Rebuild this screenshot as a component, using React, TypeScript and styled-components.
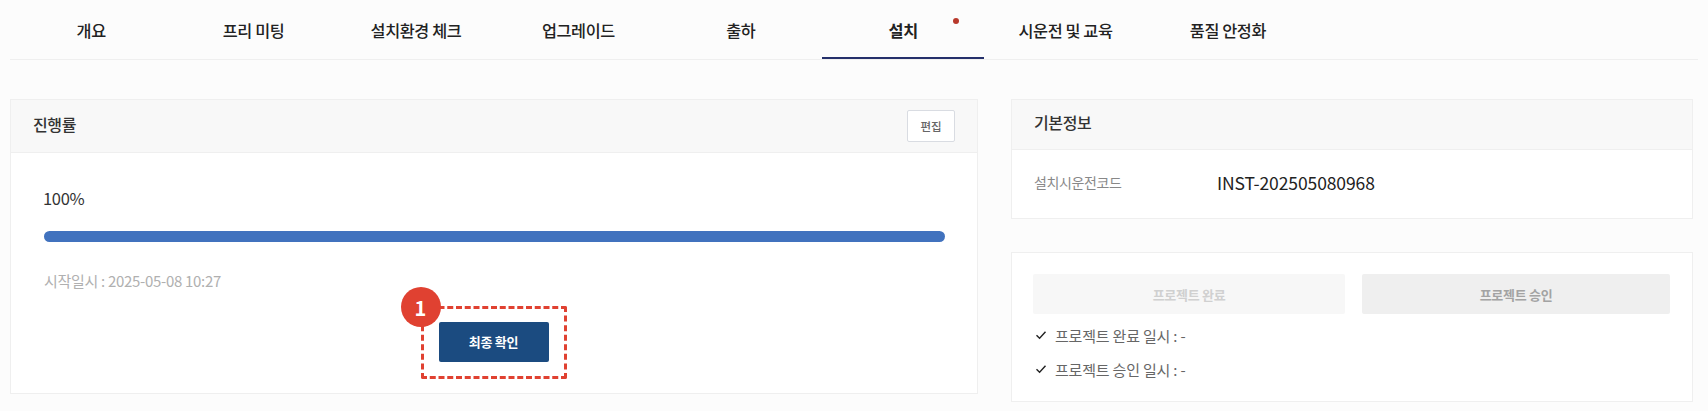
import styled, { createGlobalStyle } from 'styled-components';

const GlobalStyle = createGlobalStyle`
  html, body {
    margin: 0;
    padding: 0;
    background: #fcfcfc;
    font-family: 'Noto Sans CJK KR', 'Noto Sans', sans-serif;
    color: #222;
  }
  * { box-sizing: border-box; }
`;

const Page = styled.div`
  width: 1708px;
  height: 411px;
  overflow: hidden;
  padding: 0 15px 0 10px;
`;

const TabBar = styled.div`
  display: flex;
  height: 60px;
  border-bottom: 1px solid #efefef;
  margin-right: -5px;
`;

const Tab = styled.div<{ $active?: boolean }>`
  position: relative;
  width: 162.4px;
  height: 59px;
  padding-top: 3px;
  display: flex;
  align-items: center;
  justify-content: center;
  font-size: 16.3px;
  font-weight: ${(p) => (p.$active ? 700 : 500)};
  letter-spacing: -0.4px;
  color: #222;
  border-bottom: 2px solid ${(p) => (p.$active ? '#25306b' : 'transparent')};
`;

const Dot = styled.span`
  position: absolute;
  top: 18px;
  left: 131px;
  width: 6px;
  height: 6px;
  border-radius: 50%;
  background: #b8392b;
`;

const Columns = styled.div`
  display: grid;
  grid-template-columns: 968px 682px;
  gap: 33px;
  margin-top: 39px;
  align-items: start;
`;

const Card = styled.section<{ $height?: number }>`
  background: #fff;
  border: 1px solid #efefef;
  ${(p) => (p.$height ? `height: ${p.$height}px;` : '')}
`;

const CardHeader = styled.div<{ $height: number }>`
  height: ${(p) => p.$height}px;
  display: flex;
  align-items: center;
  justify-content: space-between;
  padding: 0 22px;
  background: #f8f8f8;
  border-bottom: 1px solid #efefef;
`;

const CardTitle = styled.h2`
  margin: 0 0 5px;
  font-size: 16px;
  font-weight: 500;
  letter-spacing: -0.4px;
  color: #333;
`;

const EditButton = styled.button`
  width: 48px;
  height: 32px;
  padding: 0;
  background: #fff;
  border: 1px solid #d9dce2;
  border-radius: 2px;
  font-family: inherit;
  font-size: 11.5px;
  font-weight: 500;
  color: #666;
`;

const ProgressBody = styled.div`
  position: relative;
  padding: 33px 32px 0 33px;
`;

const Percent = styled.div`
  margin-left: -1px;
  font-size: 16.5px;
  line-height: 24px;
  letter-spacing: -0.3px;
  color: #333;
`;

const Track = styled.div`
  height: 11px;
  margin-top: 21px;
  border-radius: 6px;
  background: #e5e5e5;
  overflow: hidden;
`;

const Fill = styled.div`
  height: 100%;
  background: #4172be;
`;

const StartedAt = styled.div`
  margin-top: 29px;
  font-size: 15px;
  line-height: 20px;
  letter-spacing: -0.3px;
  color: #b0b0b0;
`;

const ConfirmRow = styled.div`
  display: flex;
  justify-content: center;
  margin: 15px 0 0 -2px;
`;

const Highlight = styled.div`
  position: relative;
  width: 146px;
  height: 73px;
  padding-bottom: 2px;
  display: flex;
  align-items: center;
  justify-content: center;
  border: 3px dashed #e04131;
  border-radius: 2px;
`;

const Badge = styled.span`
  position: absolute;
  top: -22px;
  left: -23px;
  width: 40px;
  height: 40px;
  display: flex;
  align-items: center;
  justify-content: center;
  border-radius: 50%;
  background: #e04131;
  color: #fff;
  font-size: 20px;
  font-weight: 700;
`;

const ConfirmButton = styled.button`
  width: 110px;
  height: 40px;
  padding: 0;
  background: #1b4b80;
  border: none;
  border-radius: 2px;
  color: #fff;
  font-family: inherit;
  font-size: 13px;
  font-weight: 700;
  letter-spacing: -0.3px;
`;

const SideColumn = styled.div`
  display: flex;
  flex-direction: column;
  gap: 33px;
`;

const InfoRow = styled.div`
  height: 68px;
  display: flex;
  align-items: center;
  padding: 0 22px 4px;
`;

const InfoLabel = styled.span`
  width: 183px;
  font-size: 14px;
  letter-spacing: -0.4px;
  color: #888;
`;

const InfoValue = styled.span`
  font-size: 17.5px;
  letter-spacing: -0.1px;
  color: #222;
`;

const ActionBody = styled.div`
  padding: 21px 22px 0 21px;
`;

const ActionRow = styled.div`
  display: grid;
  grid-template-columns: 312px 308px;
  gap: 17px;
`;

const ActionButton = styled.button<{ $muted?: boolean }>`
  height: 40px;
  padding: 0;
  border: none;
  border-radius: 2px;
  background: ${(p) => (p.$muted ? '#f7f7f7' : '#efefef')};
  color: ${(p) => (p.$muted ? '#d0d0d0' : '#a3a3a3')};
  font-family: inherit;
  font-size: 13px;
  font-weight: 700;
  letter-spacing: -0.3px;
`;

const CheckList = styled.ul`
  list-style: none;
  margin: 4px 0 0;
  padding: 0;
`;

const CheckItem = styled.li`
  height: 34px;
  display: flex;
  align-items: center;
  gap: 8px;
  padding-left: 2px;
  font-size: 15px;
  letter-spacing: -0.2px;
  color: #666;
`;

const CheckIcon = () => (
  <svg width="12" height="12" viewBox="0 0 12 12" fill="none">
    <path d="M1.5 6.2 4.6 9.3 10.5 2.8" stroke="#222" strokeWidth="1.4" />
  </svg>
);

const tabs = ['개요', '프리 미팅', '설치환경 체크', '업그레이드', '출하', '설치', '시운전 및 교육', '품질 안정화'];

export default function App() {
  return (
    <Page>
      <GlobalStyle />
      <TabBar>
        {tabs.map((name) => (
          <Tab key={name} $active={name === '설치'}>
            {name}
            {name === '설치' && <Dot />}
          </Tab>
        ))}
      </TabBar>

      <Columns>
        <Card $height={295}>
          <CardHeader $height={53}>
            <CardTitle>진행률</CardTitle>
            <EditButton>편집</EditButton>
          </CardHeader>
          <ProgressBody>
            <Percent>100%</Percent>
            <Track>
              <Fill style={{ width: '100%' }} />
            </Track>
            <StartedAt>시작일시 : 2025-05-08 10:27</StartedAt>
            <ConfirmRow>
              <Highlight>
                <Badge>1</Badge>
                <ConfirmButton>최종 확인</ConfirmButton>
              </Highlight>
            </ConfirmRow>
          </ProgressBody>
        </Card>

        <SideColumn>
          <Card>
            <CardHeader $height={50}>
              <CardTitle>기본정보</CardTitle>
            </CardHeader>
            <InfoRow>
              <InfoLabel>설치시운전코드</InfoLabel>
              <InfoValue>INST-202505080968</InfoValue>
            </InfoRow>
          </Card>

          <Card $height={150}>
            <ActionBody>
              <ActionRow>
                <ActionButton $muted>프로젝트 완료</ActionButton>
                <ActionButton>프로젝트 승인</ActionButton>
              </ActionRow>
              <CheckList>
                <CheckItem>
                  <CheckIcon />
                  프로젝트 완료 일시 : -
                </CheckItem>
                <CheckItem>
                  <CheckIcon />
                  프로젝트 승인 일시 : -
                </CheckItem>
              </CheckList>
            </ActionBody>
          </Card>
        </SideColumn>
      </Columns>
    </Page>
  );
}
